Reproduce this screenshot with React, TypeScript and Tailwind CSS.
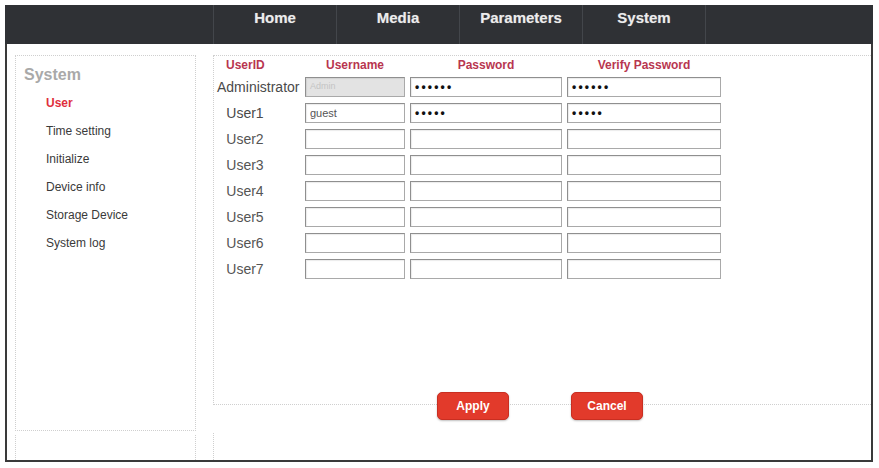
import React from "react";

const font = { fontFamily: '"Liberation Sans", Arial, sans-serif' };

function Box({ children, gray }: { children?: React.ReactNode; gray?: boolean }) {
  return (
    <div
      className={`h-[20px] flex items-center pl-[4px] border border-[#a9a9a9] border-t-[#8f8f8f] border-l-[#8f8f8f] shadow-[inset_1px_1px_1px_rgba(0,0,0,0.08)] ${
        gray ? "bg-[#e3e3e3]" : "bg-white"
      }`}
    >
      {children}
    </div>
  );
}

function Dots({ n }: { n: number }) {
  return (
    <span className="text-[12px] font-bold text-[#111] tracking-[2.2px] leading-none">
      {"•".repeat(n)}
    </span>
  );
}

export default function App() {
  const nav = ["Home", "Media", "Parameters", "System"];
  const side = ["Time setting", "Initialize", "Device info", "Storage Device", "System log"];
  const users = ["User2", "User3", "User4", "User5", "User6", "User7"];

  return (
    <div className="w-[879px] h-[468px] bg-white overflow-hidden pt-[5px] pl-[5px]" style={font}>
      <div className="w-[868px] h-[457px] flex flex-col">
        {/* nav */}
        <div className="h-[39px] bg-[#2f3135] flex pl-[208px] shrink-0">
          {nav.map((n) => (
            <div
              key={n}
              className="w-[123px] border-l border-[#43464b] flex justify-center pt-[2px] text-[15px] font-bold text-[#ececec] [text-shadow:0_0_1px_rgba(255,255,255,0.4)]"
            >
              {n}
            </div>
          ))}
          <div className="border-l border-[#43464b]" />
        </div>

        {/* content */}
        <div className="flex-1 border-2 border-t-0 border-[#3a3a3a] flex pl-[8px] pt-[11px]">
          {/* sidebar */}
          <div className="w-[181px] flex flex-col shrink-0">
            <div className="h-[376px] border border-dotted border-[#cfcfcf] pt-[9px]">
              <div className="pl-[8px] h-[20px] leading-[20px] text-[16px] font-bold text-[#a9a9a9]">System</div>
              <div className="mt-[4px] pl-[30px]">
                <div className="h-[28px] flex items-center text-[12px] font-bold text-[#e0303e]">User</div>
                {side.map((s) => (
                  <div key={s} className="h-[28px] flex items-center text-[12px] text-[#3a3a3a]">
                    {s}
                  </div>
                ))}
              </div>
            </div>
            <div className="mt-[4px] flex-1 border-l border-r border-dotted border-[#cfcfcf]" />
          </div>

          {/* main */}
          <div className="ml-[17px] flex-1 flex flex-col">
            <div className="h-[350px] border border-r-0 border-dotted border-[#cfcfcf] pl-[1px]">
              {/* header */}
              <div className="flex h-[18px] items-center text-[12px] font-bold text-[#b8364f]">
                <div className="w-[88px] pl-[11px]">UserID</div>
                <div className="ml-[2px] w-[100px] text-center">Username</div>
                <div className="ml-[5px] w-[152px] text-center">Password</div>
                <div className="ml-[5px] w-[154px] text-center">Verify Password</div>
              </div>
              <div className="mt-[3px] flex flex-col gap-[6px]">
                <div className="flex items-center h-[20px]">
                  <div className="w-[88px] pl-[2px] text-[14px] leading-[20px] text-[#4a4a4a] whitespace-nowrap">Administrator</div>
                  <div className="ml-[2px] w-[100px]">
                    <Box gray>
                      <span className="text-[9px] text-[#c4c4c4]">Admin</span>
                    </Box>
                  </div>
                  <div className="ml-[5px] w-[152px]">
                    <Box>
                      <Dots n={6} />
                    </Box>
                  </div>
                  <div className="ml-[5px] w-[154px]">
                    <Box>
                      <Dots n={6} />
                    </Box>
                  </div>
                </div>
                <div className="flex items-center h-[20px]">
                  <div className="w-[88px]">
                    <div className="w-[60px] text-center text-[14px] leading-[20px] text-[#4a4a4a]">User1</div>
                  </div>
                  <div className="ml-[2px] w-[100px]">
                    <Box>
                      <span className="text-[11px] text-[#555]">guest</span>
                    </Box>
                  </div>
                  <div className="ml-[5px] w-[152px]">
                    <Box>
                      <Dots n={5} />
                    </Box>
                  </div>
                  <div className="ml-[5px] w-[154px]">
                    <Box>
                      <Dots n={5} />
                    </Box>
                  </div>
                </div>
                {users.map((u) => (
                  <div key={u} className="flex items-center h-[20px]">
                    <div className="w-[88px]">
                      <div className="w-[60px] text-center text-[14px] leading-[20px] text-[#555]">{u}</div>
                    </div>
                    <div className="ml-[2px] w-[100px]">
                      <Box />
                    </div>
                    <div className="ml-[5px] w-[152px]">
                      <Box />
                    </div>
                    <div className="ml-[5px] w-[154px]">
                      <Box />
                    </div>
                  </div>
                ))}
              </div>
            </div>
            {/* buttons */}
            <div className="-mt-[13px] flex pl-[224px] gap-[62px] relative">
              <button className="w-[72px] h-[28px] rounded-[5px] bg-[#e23a2b] border border-[#c92e21] text-white text-[12px] font-bold shadow-[0_1px_2px_rgba(0,0,0,0.25)]">
                Apply
              </button>
              <button className="w-[72px] h-[28px] rounded-[5px] bg-[#e23a2b] border border-[#c92e21] text-white text-[12px] font-bold shadow-[0_1px_2px_rgba(0,0,0,0.25)]">
                Cancel
              </button>
            </div>
            <div className="mt-[13px] flex-1 border-l border-dotted border-[#cfcfcf]" />
          </div>
        </div>
      </div>
    </div>
  );
}
